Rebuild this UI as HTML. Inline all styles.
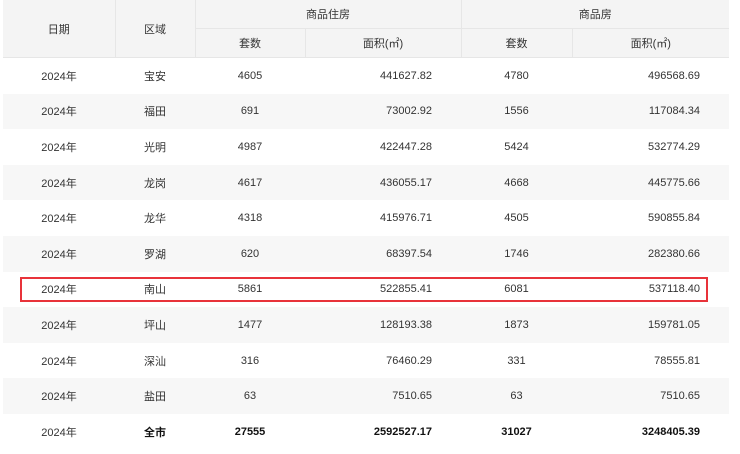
<!DOCTYPE html>
<html><head><meta charset="utf-8"><style>
body{margin:0;background:#fff;font-family:"Liberation Sans","Noto Sans CJK SC",sans-serif;font-size:11px;color:#333;}
table{position:absolute;left:3px;top:0;width:726px;border-collapse:collapse;table-layout:fixed;}
th{background:#f4f4f4;font-weight:normal;border:1px solid #e6e6e6;border-top:none;height:28px;padding:0;color:#333;}
td{height:35.6px;padding:0;text-align:center;}
tbody tr:nth-child(even) td{background:#f7f7f7;}
td.r{text-align:right;padding-right:29px;}
tr.t td{font-weight:bold;color:#111;}
.box{position:absolute;left:20px;top:277px;width:688px;height:25px;border:2px solid #e8333a;box-sizing:border-box;}
</style></head><body>
<table>
<colgroup><col style="width:112px"><col style="width:80px"><col style="width:110px"><col style="width:156px"><col style="width:111px"><col style="width:157px"></colgroup>
<thead>
<tr><th rowspan="2" style="border-left:none">日期</th><th rowspan="2">区域</th><th colspan="2">商品住房</th><th colspan="2" style="border-right:none">商品房</th></tr>
<tr><th>套数</th><th>面积(㎡)</th><th>套数</th><th style="border-right:none">面积(㎡)</th></tr>
</thead>
<tbody>
<tr><td>2024年</td><td>宝安</td><td>4605</td><td class="r">441627.82</td><td>4780</td><td class="r">496568.69</td></tr>
<tr><td>2024年</td><td>福田</td><td>691</td><td class="r">73002.92</td><td>1556</td><td class="r">117084.34</td></tr>
<tr><td>2024年</td><td>光明</td><td>4987</td><td class="r">422447.28</td><td>5424</td><td class="r">532774.29</td></tr>
<tr><td>2024年</td><td>龙岗</td><td>4617</td><td class="r">436055.17</td><td>4668</td><td class="r">445775.66</td></tr>
<tr><td>2024年</td><td>龙华</td><td>4318</td><td class="r">415976.71</td><td>4505</td><td class="r">590855.84</td></tr>
<tr><td>2024年</td><td>罗湖</td><td>620</td><td class="r">68397.54</td><td>1746</td><td class="r">282380.66</td></tr>
<tr><td>2024年</td><td>南山</td><td>5861</td><td class="r">522855.41</td><td>6081</td><td class="r">537118.40</td></tr>
<tr><td>2024年</td><td>坪山</td><td>1477</td><td class="r">128193.38</td><td>1873</td><td class="r">159781.05</td></tr>
<tr><td>2024年</td><td>深汕</td><td>316</td><td class="r">76460.29</td><td>331</td><td class="r">78555.81</td></tr>
<tr><td>2024年</td><td>盐田</td><td>63</td><td class="r">7510.65</td><td>63</td><td class="r">7510.65</td></tr>
<tr class="t"><td style="font-weight:normal;color:#333">2024年</td><td>全市</td><td>27555</td><td class="r">2592527.17</td><td>31027</td><td class="r">3248405.39</td></tr>
</tbody></table>
<div class="box"></div>
</body></html>
